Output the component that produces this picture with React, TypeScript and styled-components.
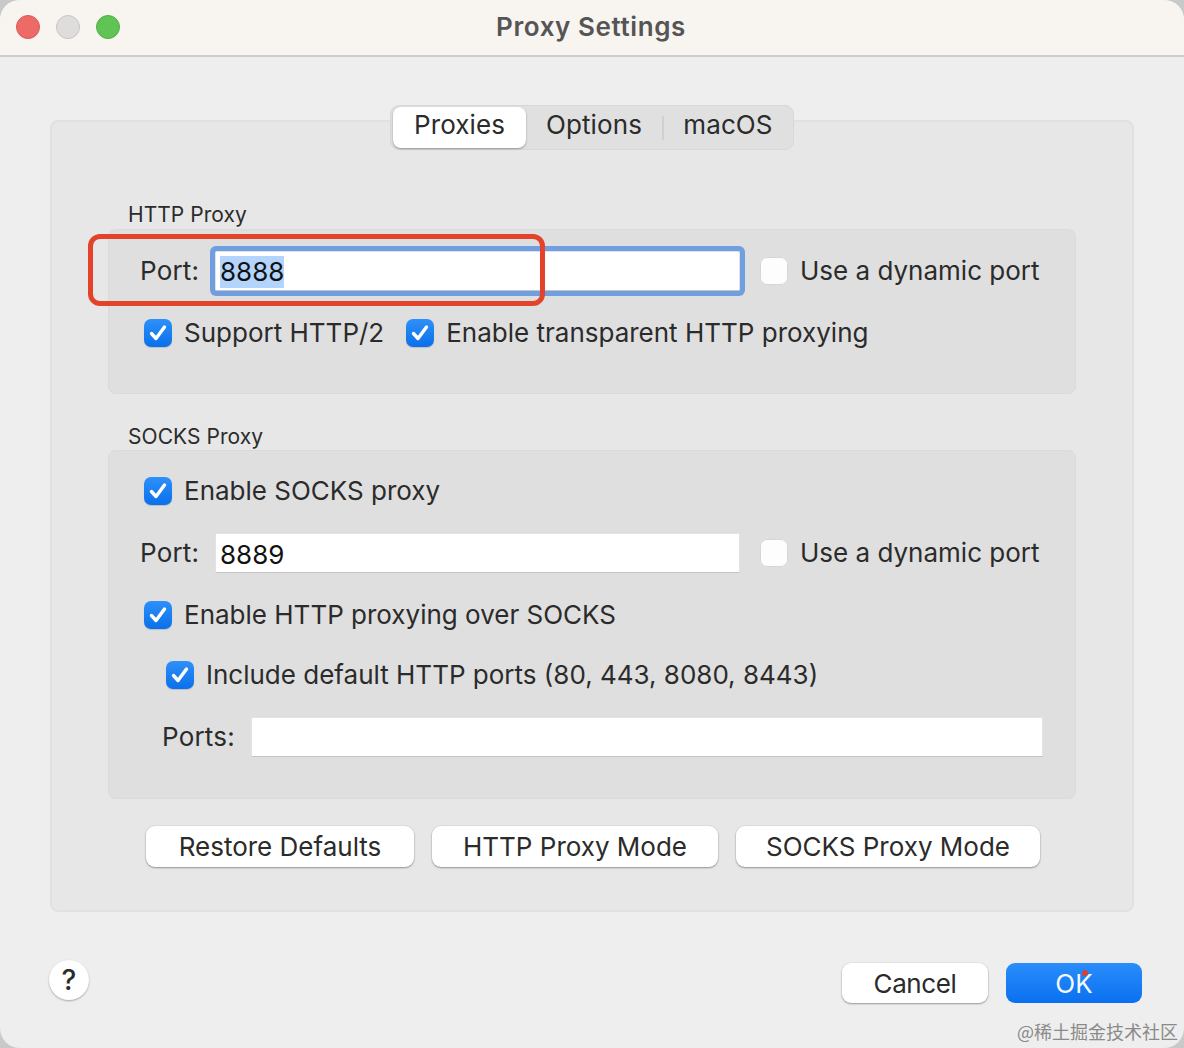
import React from "react";
import styled, { createGlobalStyle } from "styled-components";

const Global = createGlobalStyle`
  html, body { margin: 0; padding: 0; background: #c9c9c9; }
  * { box-sizing: border-box; }
  body { font-family: Inter, "Noto Sans", "Liberation Sans", sans-serif; color: #2b2b2b; }
`;

const Win = styled.div`
  position: relative;
  width: 1184px;
  height: 1048px;
  background: #eeeeee;
  border-radius: 20px;
  overflow: hidden;
  display: flex;
  flex-direction: column;
`;
const TitleBar = styled.header`
  height: 57px;
  flex: none;
  background: #f8f4f0;
  border-bottom: 2px solid #cdcccb;
  display: flex;
  align-items: center;
  padding: 0 16px 1px;
  gap: 16px;
`;
const Light = styled.span<{ $c: string; $b: string }>`
  width: 24px;
  height: 24px;
  border-radius: 50%;
  background: ${(p) => p.$c};
  border: 1px solid ${(p) => p.$b};
`;
const Title = styled.h1`
  flex: 1;
  margin: 0 122px 2px 0;
  text-align: center;
  font-size: 26px;
  font-weight: 600;
  color: #555555;
  letter-spacing: 0.6px;
`;
const Body = styled.main`
  flex: 1;
  display: flex;
  flex-direction: column;
  padding: 63px 50px 0;
`;
const Panel = styled.section`
  height: 792px;
  flex: none;
  background: #e7e7e7;
  border: 2px solid #e1e1e1;
  border-radius: 8px;
  padding: 0 56px;
  display: flex;
  flex-direction: column;
`;
const Tabs = styled.nav`
  align-self: center;
  margin-top: -17px;
  width: 404px;
  height: 45px;
  flex: none;
  background: #e0e0e0;
  border: 1px solid #d8d8d8;
  border-radius: 9px;
  display: flex;
  align-items: center;
  font-size: 26px;
  padding-left: 2px;
`;
const Tab = styled.span<{ $active?: boolean; $w: number }>`
  width: ${(p) => p.$w}px;
  height: 41px;
  display: flex;
  align-items: center;
  justify-content: center;
  padding-bottom: 6px;
  letter-spacing: 0.1px;
  color: #2b2b2b;
  background: ${(p) => (p.$active ? "#ffffff" : "transparent")};
  border-radius: ${(p) => (p.$active ? "8px" : "0")};
  box-shadow: ${(p) => (p.$active ? "0 1px 2px rgba(0,0,0,.35)" : "none")};
`;
const Sep = styled.i`
  width: 2px;
  height: 24px;
  background: #d0d0d0;
  flex: none;
`;
const GroupTitle = styled.h2<{ $top: number }>`
  margin: ${(p) => p.$top}px 0 0 20px;
  height: 24px;
  line-height: 24px;
  font-size: 21px;
  font-weight: 400;
  letter-spacing: 0.05px;
  color: #2b2b2b;
`;
const Group = styled.div<{ $h: number; $pt: number; $mt: number }>`
  height: ${(p) => p.$h}px;
  flex: none;
  background: #dfdfdf;
  border: 1px solid #dadada;
  border-radius: 8px;
  margin-top: ${(p) => p.$mt}px;
  padding: ${(p) => p.$pt}px 0 0 32px;
  display: flex;
  flex-direction: column;
`;
const Row = styled.div<{ $mt?: number; $indent?: number }>`
  height: 40px;
  display: flex;
  align-items: center;
  margin-top: ${(p) => p.$mt ?? 0}px;
  padding-left: ${(p) => p.$indent ?? 0}px;
`;
const FieldLabel = styled.label<{ $w: number }>`
  width: ${(p) => p.$w}px;
  margin: 0 0 2px -1px;
  flex: none;
  font-size: 26px;
  letter-spacing: 0.2px;
  white-space: nowrap;
`;
const Field = styled.div<{ $w: number; $focus?: boolean }>`
  width: ${(p) => p.$w}px;
  height: 40px;
  flex: none;
  background: #fff;
  border: 1px solid #e3e3e3;
  border-bottom-color: #c4c4c4;
  display: flex;
  align-items: center;
  padding: 2px 0 0 4px;
  font-size: 26px;
  color: #111;
  box-shadow: ${(p) => (p.$focus ? "0 0 0 5px #6f9fe0" : "none")};
  border-radius: ${(p) => (p.$focus ? "2px" : "0")};
`;
const Selected = styled.span`
  background: #b3d4fc;
  height: 32px;
  line-height: 32px;
`;
const Check = styled.span<{ $on?: boolean }>`
  width: 28px;
  height: 28px;
  flex: none;
  border-radius: 7px;
  display: flex;
  align-items: center;
  justify-content: center;
  background: ${(p) => (p.$on ? "linear-gradient(#2e90fa,#0a70ea)" : "#fdfdfd")};
  box-shadow: ${(p) => (p.$on ? "0 1px 1px rgba(0,0,0,.15)" : "inset 0 0 0 1px #d6d6d6")};
`;
const CheckText = styled.span`
  font-size: 26px;
  letter-spacing: 0;
  margin: 0 0 2px 12px;
  white-space: nowrap;
`;
const DynamicPort = styled.div`
  display: flex;
  align-items: center;
  margin-left: 20px;
`;
const Buttons = styled.div`
  display: flex;
  gap: 18px;
  margin: 27px 0 0 38px;
`;
const Btn = styled.button<{ $w: number }>`
  width: ${(p) => p.$w}px;
  height: 41px;
  flex: none;
  border: 0;
  border-radius: 9px;
  background: #fff;
  font: 400 26px Inter, "Noto Sans", sans-serif;
  letter-spacing: 0;
  color: #2b2b2b;
  box-shadow: 0 1px 2px rgba(0, 0, 0, 0.35), 0 0 0 1px rgba(0, 0, 0, 0.03);
  padding: 0;
`;
const CancelBtn = styled(Btn)`
  letter-spacing: -0.4px;
  height: 40px;
`;
const Footer = styled.footer`
  display: flex;
  align-items: flex-start;
  margin: 48px -8px 0 -1px;
`;
const Help = styled.span`
  width: 40px;
  height: 40px;
  flex: none;
  border-radius: 50%;
  background: #fff;
  box-shadow: 0 1px 2px rgba(0, 0, 0, 0.3);
  display: flex;
  align-items: center;
  justify-content: center;
  font-size: 28px;
  font-weight: 500;
  color: #2b2b2b;
`;
const FooterBtns = styled.div`
  margin-left: auto;
  margin-top: 3px;
  display: flex;
  gap: 18px;
`;
const Ok = styled.button`
  position: relative;
  width: 136px;
  height: 40px;
  border: 0;
  border-radius: 9px;
  padding: 0;
  background: linear-gradient(#2a8dfb, #0a70f0);
  color: #f4f9ff;
  font: 400 26px Inter, "Noto Sans", sans-serif;
`;
const RedDot = styled.i`
  position: absolute;
  left: 76px;
  top: 7px;
  width: 6px;
  height: 6px;
  border-radius: 50%;
  background: #d8403a;
`;
const Annotation = styled.div`
  position: absolute;
  left: 88px;
  top: 234px;
  width: 457px;
  height: 72px;
  border: 5px solid #e2432a;
  border-radius: 12px;
  pointer-events: none;
`;
const Watermark = styled.span`
  position: absolute;
  right: 6px;
  bottom: 6px;
  font-family: "Noto Sans CJK SC", "Liberation Serif", serif;
  font-size: 18px;
  line-height: 22px;
  color: #8a8a8a;
  white-space: nowrap;
`;

const Box = ({ on }: { on?: boolean }) => (
  <Check $on={on}>
    {on && (
      <svg width="20" height="20" viewBox="0 0 20 20" fill="none">
        <path d="M3.5 10.5 L8 15.5 L16.5 4" stroke="#fff" strokeWidth="3.4" strokeLinecap="round" strokeLinejoin="round" />
      </svg>
    )}
  </Check>
);

export default function App() {
  return (
    <Win>
      <Global />
      <TitleBar>
        <Light $c="#ee6a67" $b="#d9595a" />
        <Light $c="#dfdddb" $b="#c6c4c2" />
        <Light $c="#5fc454" $b="#53ad49" />
        <Title>Proxy Settings</Title>
      </TitleBar>
      <Body>
        <Panel>
          <Tabs>
            <Tab $active $w={133}>Proxies</Tab>
            <Tab $w={136}>Options</Tab>
            <Sep />
            <Tab $w={128}>macOS</Tab>
          </Tabs>
          <GroupTitle $top={53}>HTTP Proxy</GroupTitle>
          <Group $h={165} $pt={21} $mt={2}>
            <Row>
              <FieldLabel $w={75}>Port:</FieldLabel>
              <Field $w={525} $focus><Selected>8888</Selected></Field>
              <DynamicPort>
                <Box />
                <CheckText>Use a dynamic port</CheckText>
              </DynamicPort>
            </Row>
            <Row $mt={22} $indent={3}>
              <Box on />
              <CheckText>Support HTTP/2</CheckText>
              <Row $indent={22}>
                <Box on />
                <CheckText>Enable transparent HTTP proxying</CheckText>
              </Row>
            </Row>
          </Group>
          <GroupTitle $top={31}>SOCKS Proxy</GroupTitle>
          <Group $h={349} $pt={20} $mt={1}>
            <Row $indent={3}>
              <Box on />
              <CheckText>Enable SOCKS proxy</CheckText>
            </Row>
            <Row $mt={22}>
              <FieldLabel $w={75}>Port:</FieldLabel>
              <Field $w={525}>8889</Field>
              <DynamicPort>
                <Box />
                <CheckText>Use a dynamic port</CheckText>
              </DynamicPort>
            </Row>
            <Row $mt={22} $indent={3}>
              <Box on />
              <CheckText>Enable HTTP proxying over SOCKS</CheckText>
            </Row>
            <Row $mt={20} $indent={25}>
              <Box on />
              <CheckText>Include default HTTP ports (80, 443, 8080, 8443)</CheckText>
            </Row>
            <Row $mt={22} $indent={22}>
              <FieldLabel $w={89}>Ports:</FieldLabel>
              <Field $w={792} />
            </Row>
          </Group>
          <Buttons>
            <Btn $w={268}>Restore Defaults</Btn>
            <Btn $w={286}>HTTP Proxy Mode</Btn>
            <Btn $w={304}>SOCKS Proxy Mode</Btn>
          </Buttons>
        </Panel>
        <Footer>
          <Help>?</Help>
          <FooterBtns>
            <CancelBtn $w={146}>Cancel</CancelBtn>
            <Ok>OK<RedDot /></Ok>
          </FooterBtns>
        </Footer>
      </Body>
      <Annotation />
      <Watermark>@稀土掘金技术社区</Watermark>
    </Win>
  );
}
